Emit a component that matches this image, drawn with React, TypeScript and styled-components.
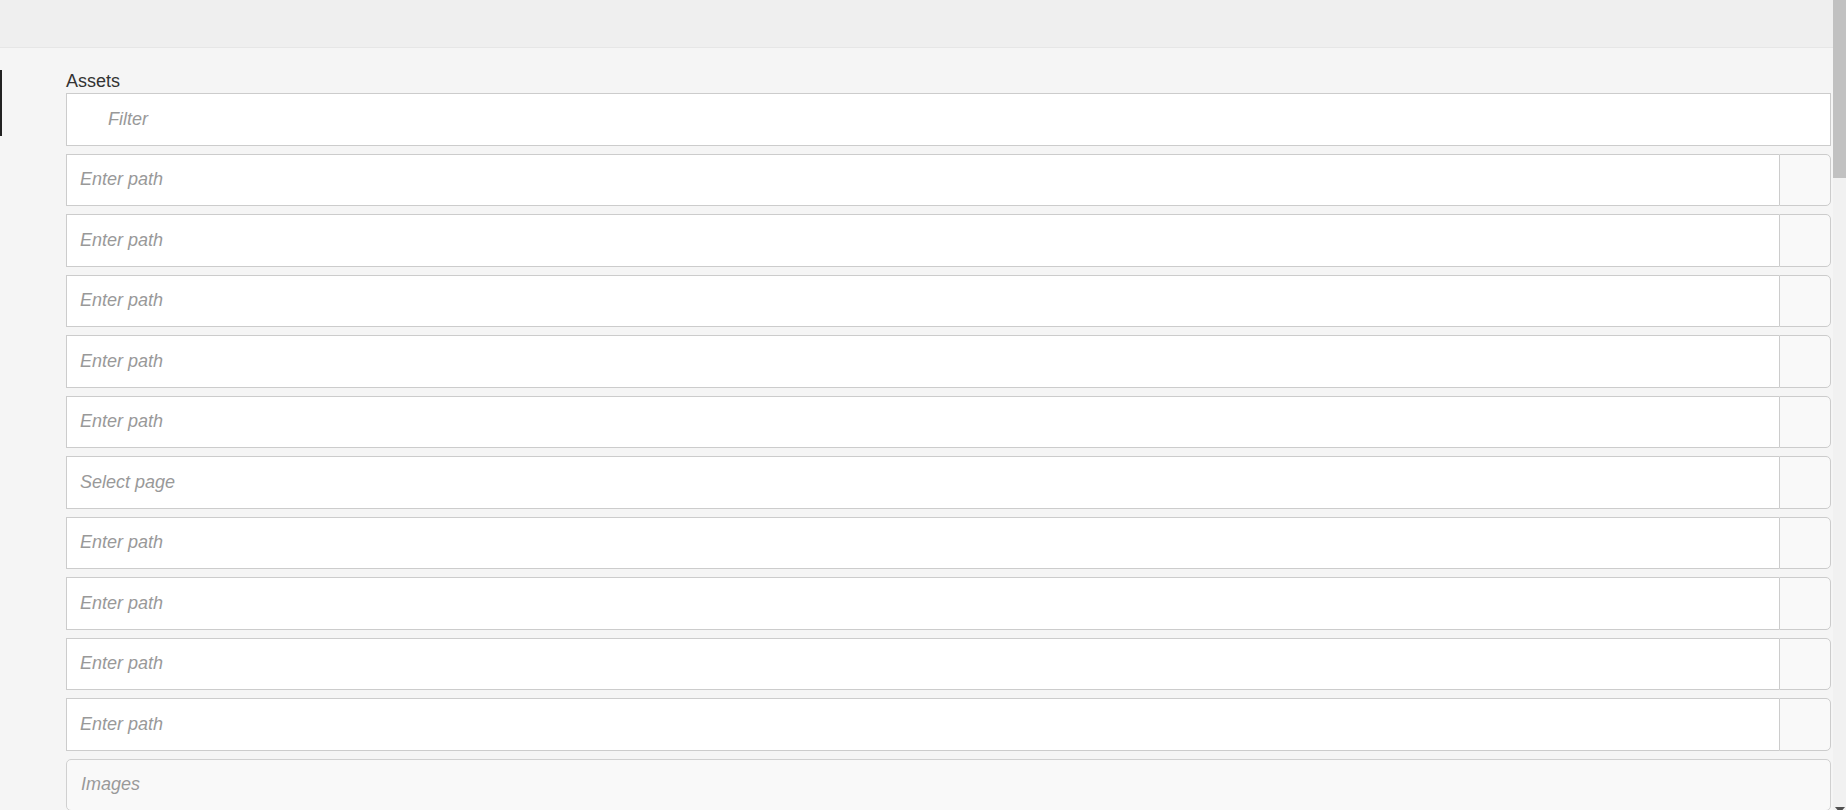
import React from "react";
import styled, { createGlobalStyle } from "styled-components";

const GlobalStyle = createGlobalStyle`
  html, body {
    margin: 0;
    padding: 0;
    height: 810px;
    overflow: hidden;
    background: #f5f5f5;
    font-family: "Liberation Sans", Arial, sans-serif;
  }
  * {
    box-sizing: border-box;
  }
`;

const pathFields = [
  "Enter path",
  "Enter path",
  "Enter path",
  "Enter path",
  "Enter path",
  "Select page",
  "Enter path",
  "Enter path",
  "Enter path",
  "Enter path",
];

const App: React.FC = () => {
  return (
    <>
      <GlobalStyle />
      <Screen>
        <Main>
          <TopBar />
          <Body>
            <Sidebar>
              <ActiveMarker />
            </Sidebar>
            <Panel>
              <Label>Assets</Label>
              <FilterInput placeholder="Filter" />
              {pathFields.map((text, i) => (
                <PathRow key={i}>
                  <PathInput placeholder={text} />
                  <AddOn />
                </PathRow>
              ))}
              <Section>Images</Section>
            </Panel>
          </Body>
        </Main>
        <ScrollTrack>
          <ScrollThumb />
          <ScrollArrow>
            <svg width="10" height="6" viewBox="0 0 10 6">
              <path d="M0 0h10L5 6z" fill="#505050" />
            </svg>
          </ScrollArrow>
        </ScrollTrack>
      </Screen>
    </>
  );
};

export default App;

const Screen = styled.div`
  display: flex;
  width: 1846px;
  height: 810px;
  overflow: hidden;
`;

const Main = styled.div`
  flex: 1;
  display: flex;
  flex-direction: column;
  min-width: 0;
`;

const TopBar = styled.div`
  height: 48px;
  flex-shrink: 0;
  background: #efefef;
  border-bottom: 1px solid #e6e6e6;
`;

const Body = styled.div`
  flex: 1;
  display: flex;
  background: #f5f5f5;
`;

const Sidebar = styled.div`
  width: 66px;
  flex-shrink: 0;
  padding-top: 22px;
`;

const ActiveMarker = styled.div`
  width: 2px;
  height: 66px;
  background: #222222;
`;

const Panel = styled.div`
  flex: 1;
  display: flex;
  flex-direction: column;
  gap: 8px;
  padding: 24px 2px 0 0;
  min-width: 0;
`;

const Label = styled.div`
  font-size: 18px;
  line-height: 19px;
  color: #333333;
  margin-bottom: -6px;
`;

const fieldText = `
  font-family: "Liberation Sans", Arial, sans-serif;
  font-size: 18px;
  color: #555555;
  outline: none;
  &::placeholder {
    color: #999999;
    font-style: italic;
  }
`;

const FilterInput = styled.input`
  ${fieldText}
  height: 52.5px;
  flex-shrink: 0;
  width: 100%;
  background: #ffffff;
  border: 1px solid #cccccc;
  padding: 0 0 0 41px;
`;

const PathRow = styled.div`
  display: flex;
  height: 52.5px;
  flex-shrink: 0;
`;

const PathInput = styled.input`
  ${fieldText}
  flex: 1;
  min-width: 0;
  height: 100%;
  background: #ffffff;
  border: 1px solid #cccccc;
  border-right: none;
  padding: 0 0 0 13px;
`;

const AddOn = styled.div`
  width: 52px;
  height: 100%;
  background: #f9f9f9;
  border: 1px solid #cccccc;
  border-radius: 0 5px 5px 0;
`;

const Section = styled.div`
  height: 52.5px;
  flex-shrink: 0;
  display: flex;
  align-items: center;
  padding-left: 14px;
  background: #f9f9f9;
  border: 1px solid #d0d0d0;
  border-radius: 5px;
  font-size: 18px;
  font-style: italic;
  color: #999999;
`;

const ScrollTrack = styled.div`
  width: 13px;
  flex-shrink: 0;
  display: flex;
  flex-direction: column;
  justify-content: space-between;
  background: #f1f1f1;
`;

const ScrollThumb = styled.div`
  height: 178px;
  background: #c1c1c1;
`;

const ScrollArrow = styled.div`
  display: flex;
  justify-content: center;
  height: 3px;
  overflow: hidden;
  align-items: flex-start;
`;
